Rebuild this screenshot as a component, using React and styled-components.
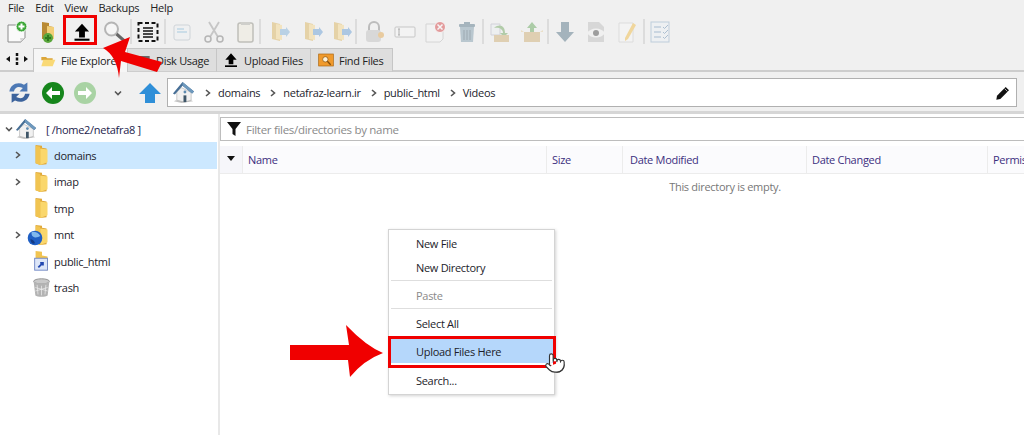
import { Fragment } from "react";
import styled, { createGlobalStyle } from "styled-components";
import { Pointer } from "lucide-react";

const GlobalStyle = createGlobalStyle`
  html, body {
    margin: 0;
    padding: 0;
    background: #fff;
  }
  * {
    box-sizing: border-box;
  }
`;

const Page = styled.div`
  position: relative;
  width: 1024px;
  height: 435px;
  overflow: hidden;
  background: #fff;
  font-family: "Open Sans", "Noto Sans", sans-serif;
  font-size: 11px;
  letter-spacing: -0.3px;
  color: #1d1d2c;
`;

const Chrome = styled.div`
  background: #f0f0f0;
  border-bottom: 3px solid #d6d6d6;
  height: 114px;
`;

const MenuBar = styled.div`
  display: flex;
  gap: 11px;
  height: 15px;
  padding-left: 8px;
  align-items: center;
  color: #222;
`;

const ToolBar = styled.div`
  display: flex;
  align-items: center;
  height: 33px;
  padding-left: 2px;
`;

const Tool = styled.div`
  display: flex;
  justify-content: center;
  align-items: center;
  flex: none;
  width: ${(p) => p.$w}px;
  opacity: ${(p) => (p.$faded ? 0.42 : 1)};
`;

const ToolSep = styled.div`
  flex: none;
  width: 2px;
  height: 25px;
  background: #dcdcdc;
`;

const TabRow = styled.div`
  display: flex;
  height: 24px;
  border-bottom: 2px solid #cdcdcd;
`;

const TabNav = styled.div`
  display: flex;
  align-items: center;
  justify-content: center;
  width: 33px;
  flex: none;
`;

const Tab = styled.div`
  display: flex;
  align-items: center;
  gap: 5px;
  flex: none;
  width: ${(p) => p.$w}px;
  height: 24px;
  padding-left: ${(p) => p.$pad}px;
  background: ${(p) => (p.$active ? "#f6f6f6" : "#dedede")};
  border: 1px solid #c6c6c6;
  border-bottom: ${(p) => (p.$active ? "none" : "1px solid #cdcdcd")};
  border-left: ${(p) => (p.$active ? "1px solid #c6c6c6" : "none")};
  color: #222;
`;

const NavBar = styled.div`
  display: flex;
  align-items: center;
  height: 40px;
  padding-top: 1px;
`;

const NavSlot = styled.div`
  display: flex;
  align-items: center;
  justify-content: center;
  flex: none;
  width: ${(p) => p.$w}px;
`;

const AddressBox = styled.div`
  display: flex;
  align-items: center;
  width: 850px;
  height: 29px;
  padding: 0 5px 0 4px;
  background: #fff;
  border: 1px solid #b0b0b0;
`;

const Crumb = styled.span`
  margin-left: 6px;
  color: #1d1d2c;
`;

const CrumbChevron = styled.span`
  display: flex;
  margin-left: 9px;
  flex: none;
`;

const EditSlot = styled.div`
  display: flex;
  margin-left: auto;
`;

const Body = styled.div`
  display: flex;
  height: 321px;
`;

const Tree = styled.div`
  flex: none;
  width: 220px;
  padding-top: 2px;
  border-right: 2px solid #e8e8e8;
`;

const RootRow = styled.div`
  display: flex;
  align-items: center;
  height: 26px;
  padding-left: 5px;
  color: #1c1c4c;
`;

const RootLabel = styled.span`
  margin-left: 7px;
`;

const TreeRow = styled.div`
  display: flex;
  align-items: center;
  width: 217px;
  height: 26.5px;
  padding-left: 14px;
  background: ${(p) => (p.$selected ? "#cce8ff" : "transparent")};
`;

const ArrowSlot = styled.div`
  display: flex;
  width: 17px;
  flex: none;
`;

const TreeIcon = styled.div`
  position: relative;
  display: flex;
  width: 23px;
  flex: none;
`;

const GlobeBadge = styled.div`
  position: absolute;
  left: -4px;
  top: 6px;
  display: flex;
`;

const FileArea = styled.div`
  flex: none;
  width: 1010px;
`;

const FilterBar = styled.div`
  display: flex;
  align-items: center;
  height: 24px;
  margin-top: 3px;
  border: 1px solid #bdbdbd;
  border-right: none;
  padding-left: 5px;
`;

const FilterText = styled.span`
  margin-left: 4px;
  color: #8a8a8a;
  font-size: 11.5px;
`;

const HeaderRow = styled.div`
  display: flex;
  height: 28px;
  margin-top: 5px;
  border-bottom: 1px solid #ececec;
  background: #fbfbfd;
`;

const SortCell = styled.div`
  flex: none;
  width: 23px;
  padding: 3px 0 0 7px;
  background: #f6f6fa;
  border-right: 1px solid #ececec;
`;

const HeaderCell = styled.div`
  display: flex;
  align-items: center;
  flex: none;
  width: ${(p) => p.$w}px;
  padding-left: ${(p) => p.$pad}px;
  border-right: 1px solid #ececec;
  color: #3c2f80;
`;

const EmptyNote = styled.div`
  margin-top: 5px;
  text-align: center;
  color: #777;
`;

const Menu = styled.div`
  position: absolute;
  left: 388px;
  top: 229px;
  width: 167px;
  height: 166px;
  padding-top: 1px;
  background: #fff;
  border: 1px solid #d4d4d4;
  box-shadow: 1px 1px 3px rgba(0, 0, 0, 0.18);
`;

const MenuItem = styled.div`
  display: flex;
  align-items: center;
  height: 24px;
  margin: ${(p) => (p.$hot ? "4px 1px 5px" : "0")};
  padding-left: ${(p) => (p.$hot ? "26px" : "27px")};
  background: ${(p) => (p.$hot ? "#b5d7fb" : "transparent")};
  color: ${(p) => (p.$off ? "#8a8a8a" : "#1c1c2a")};
`;

const MenuSep = styled.div`
  height: 1px;
  margin: 1px 2px 2px;
  background: #dedede;
`;

const RedBox = styled.div`
  position: absolute;
  left: ${(p) => p.$x}px;
  top: ${(p) => p.$y}px;
  width: ${(p) => p.$w}px;
  height: ${(p) => p.$h}px;
  border: 3px solid #f00000;
`;

const Overlay = styled.svg`
  position: absolute;
  left: ${(p) => p.$x}px;
  top: ${(p) => p.$y}px;
`;

const Cursor = styled.div`
  position: absolute;
  left: 544px;
  top: 352px;
  display: flex;
`;

const Svg = ({ s = 24, children }) => (
  <svg width={s} height={s} viewBox="0 0 24 24">
    {children}
  </svg>
);

const NewFileIcon = () => (
  <Svg>
    <path d="M3 5h12l5 5v8l-4 4H3z" fill="#fafafa" stroke="#8c8c8c" />
    <path d="M16 22l-1-4 5 0z" fill="#d5d5d5" />
    <circle cx="16.5" cy="6.5" r="5.5" fill="#3fa83a" stroke="#fff" />
    <path d="M16.5 3.5v6M13.5 6.5h6" stroke="#fff" strokeWidth="2" />
  </Svg>
);

const NewDirIcon = () => (
  <Svg>
    <path d="M5 2l7 1v3l4 1v12H5z" fill="#b98a34" />
    <path d="M10 6l7 1v12h-7z" fill="#f3cf78" />
    <circle cx="11" cy="18" r="5" fill="#5aa63c" />
    <path d="M11 15v6M8 18h6" stroke="#2f7a1e" strokeWidth="2" />
  </Svg>
);

const UploadIcon = ({ s = 24 }) => (
  <Svg s={s}>
    <path d="M12 2l8.500 9.500H15.500v7h-7v-7H3.500z" fill="#000" />
    <rect x="3" y="20" width="18" height="2.5" fill="#000" />
  </Svg>
);

const SearchIcon = () => (
  <Svg>
    <circle cx="9.5" cy="9" r="6.5" fill="#f6f6f6" stroke="#b5b5b5" strokeWidth="2" />
    <path d="M14.500 14l8 7" stroke="#666" strokeWidth="3" />
  </Svg>
);

const SelectIcon = () => (
  <Svg>
    <rect x="2.5" y="3" width="19" height="18" fill="none" stroke="#111" strokeWidth="2" strokeDasharray="4 2.5" />
    <path d="M7 8h10M7 11h10M7 14h10M7 17h10" stroke="#111" strokeWidth="1.5" />
  </Svg>
);

const CopyIcon = () => (
  <Svg>
    <rect x="4" y="5" width="16" height="15" rx="2" fill="#eef1f4" stroke="#a4b0ba" />
    <path d="M7 9h7M7 12h10" stroke="#7fb4d8" strokeWidth="1.5" />
  </Svg>
);

const ScissorsIcon = () => (
  <Svg>
    <path d="M7 2l9 15M17 2L8 17" stroke="#8d8d8d" strokeWidth="1.8" />
    <circle cx="6" cy="19" r="3" fill="none" stroke="#666" strokeWidth="1.5" />
    <circle cx="18" cy="19" r="3" fill="none" stroke="#666" strokeWidth="1.5" />
  </Svg>
);

const PasteIcon = () => (
  <Svg>
    <rect x="5" y="3" width="15" height="19" rx="2" fill="#efe9da" stroke="#7d7d70" strokeWidth="1.5" />
    <rect x="8" y="2" width="9" height="3" fill="#a3a39a" />
  </Svg>
);

const FolderMoveIcon = ({ tint }) => (
  <Svg>
    <path d="M5 2l8 2v17l-8-2z" fill="#d8aa44" />
    <path d="M9 4l6 1v15l-6-1z" fill="#f5d27c" />
    <path d="M13 9h6V7l4 5-4 5v-2h-6z" fill={tint} />
  </Svg>
);

const LockIcon = () => (
  <Svg>
    <path d="M7 11V7a5 5 0 0 1 10 0v4" fill="none" stroke="#777" strokeWidth="2" />
    <rect x="4" y="10" width="15" height="12" rx="3" fill="#b9b9b9" />
    <circle cx="19" cy="15" r="3" fill="#e09a31" />
  </Svg>
);

const RenameIcon = () => (
  <Svg>
    <rect x="2" y="7" width="20" height="10" rx="1" fill="#f8f8f8" stroke="#8f8f8f" />
    <path d="M6 9v6M5 9h2M5 15h2" stroke="#555" />
  </Svg>
);

const DeleteIcon = () => (
  <Svg>
    <path d="M3 4h13l4 5v10l-3 3H3z" fill="#f7f7f7" stroke="#b0b0b0" />
    <circle cx="17" cy="7" r="5.5" fill="#d3282a" stroke="#fff" />
    <path d="M14.500 4.500l5 5M19.500 4.500l-5 5" stroke="#fff" strokeWidth="1.5" />
  </Svg>
);

const TrashIcon = () => (
  <Svg>
    <rect x="4" y="4" width="16" height="3" rx="1" fill="#3f6478" />
    <rect x="9" y="2" width="6" height="2" fill="#3f6478" />
    <path d="M5 7h14l-1 15H6z" fill="#6f8fa3" />
    <path d="M9 10v10M12 10v10M15 10v10" stroke="#2c4a5c" />
  </Svg>
);

const BinIcon = () => (
  <Svg s={21}>
    <ellipse cx="12" cy="5" rx="9" ry="3" fill="#c9c9c9" stroke="#8b8b8b" />
    <path d="M3 5l2 16c2 2 12 2 14 0l2-16c-3 3-15 3-18 0z" fill="#b3b3b3" />
    <path d="M7 9l1 11M12 10v11M17 9l-1 11M5 12l14 4M19 12L5 16" stroke="#eee" strokeWidth="0.8" />
  </Svg>
);

const ExtractIcon = () => (
  <Svg>
    <path d="M3 4h9v11H3z" fill="#e9eef0" stroke="#aab" />
    <path d="M6 8c6-5 11-2 11 5h3l-4 4-4-4h3c0-4-4-6-9-5z" fill="#5f9c4a" />
    <path d="M6 15h15v7H6z" fill="#c9a45e" />
  </Svg>
);

const CompressIcon = () => (
  <Svg>
    <path d="M12 2l5 6h-3v6h-4V8H7z" fill="#4f9c45" />
    <path d="M4 12h16v10H4z" fill="#c9a45e" />
    <path d="M1 10l3 2h16l3-2v2H1z" fill="#e3c88e" />
  </Svg>
);

const DownloadIcon = () => (
  <Svg>
    <path d="M8 2h8v10h5l-9 10-9-10h5z" fill="#3d6075" />
  </Svg>
);

const ViewIcon = () => (
  <Svg>
    <path d="M4 2h11l5 5v15H4z" fill="#b6b6b6" />
    <path d="M3 13c4-6 14-6 18 0-4 6-14 6-18 0z" fill="#f2f2f2" />
    <circle cx="12" cy="13" r="3" fill="#2d2d2d" />
  </Svg>
);

const EditFileIcon = () => (
  <Svg>
    <path d="M4 3h14v19H4z" fill="#f8f8f8" stroke="#c4c4c4" />
    <path d="M18 3l3 2-8 14-3 2v-3z" fill="#f0b429" />
  </Svg>
);

const ChecklistIcon = () => (
  <Svg>
    <rect x="3" y="2" width="18" height="20" fill="#e9f0f7" stroke="#7d9fc0" />
    <path d="M6 7h7M6 12h7M6 17h7" stroke="#7d9fc0" strokeWidth="1.5" />
    <path d="M15 7l1.500 1.500L20 5M15 12l1.500 1.500L20 10M15 17l1.500 1.500L20 15" fill="none" stroke="#4e7ca8" />
  </Svg>
);

const FolderIcon = () => (
  <Svg s={22}>
    <path d="M5 1l7 1v2l5 1v17l-7 1-5-2z" fill="#e0a93a" />
    <path d="M10 5l8 1v14l-8 3z" fill="#fad76c" />
    <path d="M5 2l5 1v20l-5-2z" fill="#f1c451" />
  </Svg>
);

const HomeIcon = ({ s = 24 }) => (
  <Svg s={s}>
    <path d="M2 21l8 2 12-2-2-1H4z" fill="#c4c4c4" />
    <path d="M5 11l5-4 10 5v8l-7 2-8-2z" fill="#f1f1f1" stroke="#a8a8a8" strokeWidth="0.6" />
    <path d="M1 13L11 1l12 10-2 2L11 5l-8 9z" fill="#476f96" />
    <path d="M11 1l12 10-2 2L11 5z" fill="#6e99bd" />
    <rect x="12" y="15" width="3" height="7" fill="#3f5668" />
    <circle cx="13.5" cy="11.5" r="1.5" fill="#5e8bb0" />
  </Svg>
);

const GlobeIcon = () => (
  <Svg s={16}>
    <circle cx="12" cy="12" r="11" fill="#1f5fc4" />
    <path d="M7 3c5-1 10 1 13 6-3 1-5 3-9 2-3-1-5-4-4-8z" fill="#7fb8ee" />
    <path d="M5 14c3 0 6 2 7 6-3 2-6 0-7-6z" fill="#123a86" />
  </Svg>
);

const ShortcutFolderIcon = () => (
  <Svg s={22}>
    <path d="M5 1l7 1v4l6 1v15l-13-1z" fill="#f1c451" />
    <rect x="4" y="9" width="14" height="13" fill="#dde6f8" stroke="#6f86c5" />
    <path d="M8 19l5-5M10 14h3v3" stroke="#2247b0" strokeWidth="2" fill="none" />
  </Svg>
);

const Chevron = ({ dir = "right", color = "#555" }) => (
  <svg width="8" height="8" viewBox="0 0 8 8">
    <path
      d={dir === "right" ? "M2 1l3.500 3L2 7" : "M1 2.500l3 3 3-3"}
      fill="none"
      stroke={color}
      strokeWidth="1.6"
    />
  </svg>
);

const Refresh = () => (
  <Svg s={27}>
    <path d="M3 11C4 5 10 2 16 5l3-2v8h-7l3-3c-4-2-7-1-8 3z" fill="#4d79b5" />
    <path d="M21 13c-1 6-7 9-13 6l-3 2v-8h7l-3 3c4 2 7 1 8-3z" fill="#3c639c" />
  </Svg>
);

const RoundArrow = ({ fill, back }) => (
  <Svg>
    <circle cx="12" cy="12" r="11" fill={fill} />
    <path
      d={back ? "M5 12l6-6v4h8v4h-8v4z" : "M19 12l-6-6v4H5v4h8v4z"}
      fill="#fff"
    />
  </Svg>
);

const NavUp = () => (
  <Svg>
    <path d="M12 2l11 11h-6v9H7v-9H1z" fill="#2f8fd8" />
  </Svg>
);

const Pen = () => (
  <Svg s={16}>
    <path d="M16 3l5 5-13 13-6 1 1-6z" fill="#111" />
    <path d="M14.500 5.500l4 4" stroke="#fff" strokeWidth="1" />
  </Svg>
);

const Funnel = () => (
  <svg width="16" height="16" viewBox="0 0 16 16">
    <path d="M1 1h14L9.500 8v7l-3-2V8z" fill="#111" />
  </svg>
);

const DiskIcon = () => (
  <Svg s={16}>
    <rect x="2" y="6" width="20" height="12" fill="#666" />
  </Svg>
);

const FindIcon = () => (
  <Svg s={16}>
    <rect x="1" y="3" width="22" height="18" fill="#f09a2c" stroke="#a96510" />
    <circle cx="11" cy="11" r="4" fill="#fff3d8" stroke="#804c0c" />
    <path d="M14 14l5 5" stroke="#804c0c" strokeWidth="2" />
  </Svg>
);

const OpenFolderIcon = () => (
  <Svg s={16}>
    <path d="M2 6h7l2 2h8v3H2z" fill="#dca63a" />
    <path d="M2 20l3-10h18l-4 10z" fill="#f9d976" />
  </Svg>
);

const tools = [
  { w: 30, icon: <NewFileIcon /> },
  { w: 34, icon: <NewDirIcon /> },
  { w: 32, icon: <UploadIcon s={20} /> },
  { w: 32, icon: <SearchIcon /> },
  { sep: true },
  { w: 32, icon: <SelectIcon /> },
  { sep: true },
  { w: 32, icon: <CopyIcon />, faded: true },
  { w: 32, icon: <ScissorsIcon />, faded: true },
  { w: 29, icon: <PasteIcon />, faded: true },
  { sep: true },
  { w: 36, icon: <FolderMoveIcon tint="#6fa8d8" />, faded: true },
  { w: 30, icon: <FolderMoveIcon tint="#4f8fd0" />, faded: true },
  { w: 28, icon: <FolderMoveIcon tint="#4f8fd0" />, faded: true },
  { sep: true },
  { w: 34, icon: <LockIcon />, faded: true },
  { w: 28, icon: <RenameIcon />, faded: true },
  { w: 32, icon: <DeleteIcon />, faded: true },
  { w: 31, icon: <TrashIcon />, faded: true },
  { sep: true },
  { w: 32, icon: <ExtractIcon />, faded: true },
  { w: 31, icon: <CompressIcon />, faded: true },
  { sep: true },
  { w: 32, icon: <DownloadIcon />, faded: true },
  { w: 30, icon: <ViewIcon />, faded: true },
  { w: 32, icon: <EditFileIcon />, faded: true },
  { sep: true },
  { w: 30, icon: <ChecklistIcon />, faded: true },
];

const treeItems = [
  { name: "domains", arrow: true, selected: true, icon: <FolderIcon /> },
  { name: "imap", arrow: true, icon: <FolderIcon /> },
  { name: "tmp", icon: <FolderIcon /> },
  {
    name: "mnt",
    arrow: true,
    icon: (
      <>
        <FolderIcon />
        <GlobeBadge>
          <GlobeIcon />
        </GlobeBadge>
      </>
    ),
  },
  { name: "public_html", icon: <ShortcutFolderIcon /> },
  { name: "trash", icon: <BinIcon /> },
];

const columns = [
  { name: "Name", w: 304, pad: 5 },
  { name: "Size", w: 76, pad: 5 },
  { name: "Date Modified", w: 184, pad: 7 },
  { name: "Date Changed", w: 181, pad: 5 },
  { name: "Permissions", w: 120, pad: 5 },
];

const crumbs = ["domains", "netafraz-learn.ir", "public_html", "Videos"];

const App = () => {
  return (
    <Page>
      <GlobalStyle />
      <Chrome>
        <MenuBar>
          <span>File</span>
          <span>Edit</span>
          <span>View</span>
          <span>Backups</span>
          <span>Help</span>
        </MenuBar>
        <ToolBar>
          {tools.map((tool, index) =>
            tool.sep ? (
              <ToolSep key={index} />
            ) : (
              <Tool key={index} $w={tool.w} $faded={tool.faded}>
                {tool.icon}
              </Tool>
            )
          )}
        </ToolBar>
        <TabRow>
          <TabNav>
            <svg width="26" height="14" viewBox="0 0 26 14">
              <path d="M6 4v6L2 7zM20 4v6l4-3z" fill="#111" />
              <path d="M13 1v3M13 5.500v3M13 10v3" stroke="#111" strokeWidth="2.5" />
            </svg>
          </TabNav>
          <Tab $w={95} $pad={6} $active>
            <OpenFolderIcon />
            <span>File Explorer</span>
          </Tab>
          <Tab $w={89} $pad={7}>
            <DiskIcon />
            <span>Disk Usage</span>
          </Tab>
          <Tab $w={94} $pad={6}>
            <UploadIcon s={16} />
            <span>Upload Files</span>
          </Tab>
          <Tab $w={82} $pad={7}>
            <FindIcon />
            <span>Find Files</span>
          </Tab>
        </TabRow>
        <NavBar>
          <NavSlot $w={38}>
            <Refresh />
          </NavSlot>
          <NavSlot $w={29}>
            <RoundArrow fill="#16861c" back />
          </NavSlot>
          <NavSlot $w={35}>
            <RoundArrow fill="#a9d3a4" />
          </NavSlot>
          <NavSlot $w={31}>
            <Chevron dir="down" />
          </NavSlot>
          <NavSlot $w={34}>
            <NavUp />
          </NavSlot>
          <AddressBox>
            <HomeIcon s={23} />
            {crumbs.map((crumb) => (
              <Fragment key={crumb}>
                <CrumbChevron>
                  <Chevron />
                </CrumbChevron>
                <Crumb>{crumb}</Crumb>
              </Fragment>
            ))}
            <EditSlot>
              <Pen />
            </EditSlot>
          </AddressBox>
        </NavBar>
      </Chrome>
      <Body>
        <Tree>
          <RootRow>
            <Chevron dir="down" />
            <NavSlot $w={26}>
              <HomeIcon s={22} />
            </NavSlot>
            <RootLabel>[ /home2/netafra8 ]</RootLabel>
          </RootRow>
          {treeItems.map((item) => (
            <TreeRow key={item.name} $selected={item.selected}>
              <ArrowSlot>{item.arrow && <Chevron />}</ArrowSlot>
              <TreeIcon>{item.icon}</TreeIcon>
              <span>{item.name}</span>
            </TreeRow>
          ))}
        </Tree>
        <FileArea>
          <FilterBar>
            <Funnel />
            <FilterText>Filter files/directories by name</FilterText>
          </FilterBar>
          <HeaderRow>
            <SortCell>
              <svg width="8" height="5" viewBox="0 0 8 5">
                <path d="M0 0h8L4 5z" fill="#111" />
              </svg>
            </SortCell>
            {columns.map((col) => (
              <HeaderCell key={col.name} $w={col.w} $pad={col.pad}>
                {col.name}
              </HeaderCell>
            ))}
          </HeaderRow>
          <EmptyNote>This directory is empty.</EmptyNote>
        </FileArea>
      </Body>
      <Menu>
        <MenuItem>New File</MenuItem>
        <MenuItem>New Directory</MenuItem>
        <MenuSep />
        <MenuItem $off>Paste</MenuItem>
        <MenuSep />
        <MenuItem>Select All</MenuItem>
        <MenuItem $hot>Upload Files Here</MenuItem>
        <MenuItem>Search...</MenuItem>
      </Menu>
      <RedBox $x={388} $y={336} $w={168} $h={32} />
      <RedBox $x={63} $y={15} $w={34} $h={30} />
      <Overlay $x={100} $y={34} width="66" height="46" viewBox="0 0 66 46">
        <path d="M3 14L30 3 25 18 62 28 57 38 21 27 19 44Q17 22 3 14z" fill="#f00000" />
      </Overlay>
      <Overlay $x={288} $y={322} width="98" height="58" viewBox="0 0 98 58">
        <path d="M2 23H61L58 3Q78 24 95 31 76 38 62 55L60 38H2z" fill="#f00000" />
      </Overlay>
      <Cursor>
        <Pointer size={22} color="#333" fill="#fff" strokeWidth={1.25} />
      </Cursor>
    </Page>
  );
};

export default App;
